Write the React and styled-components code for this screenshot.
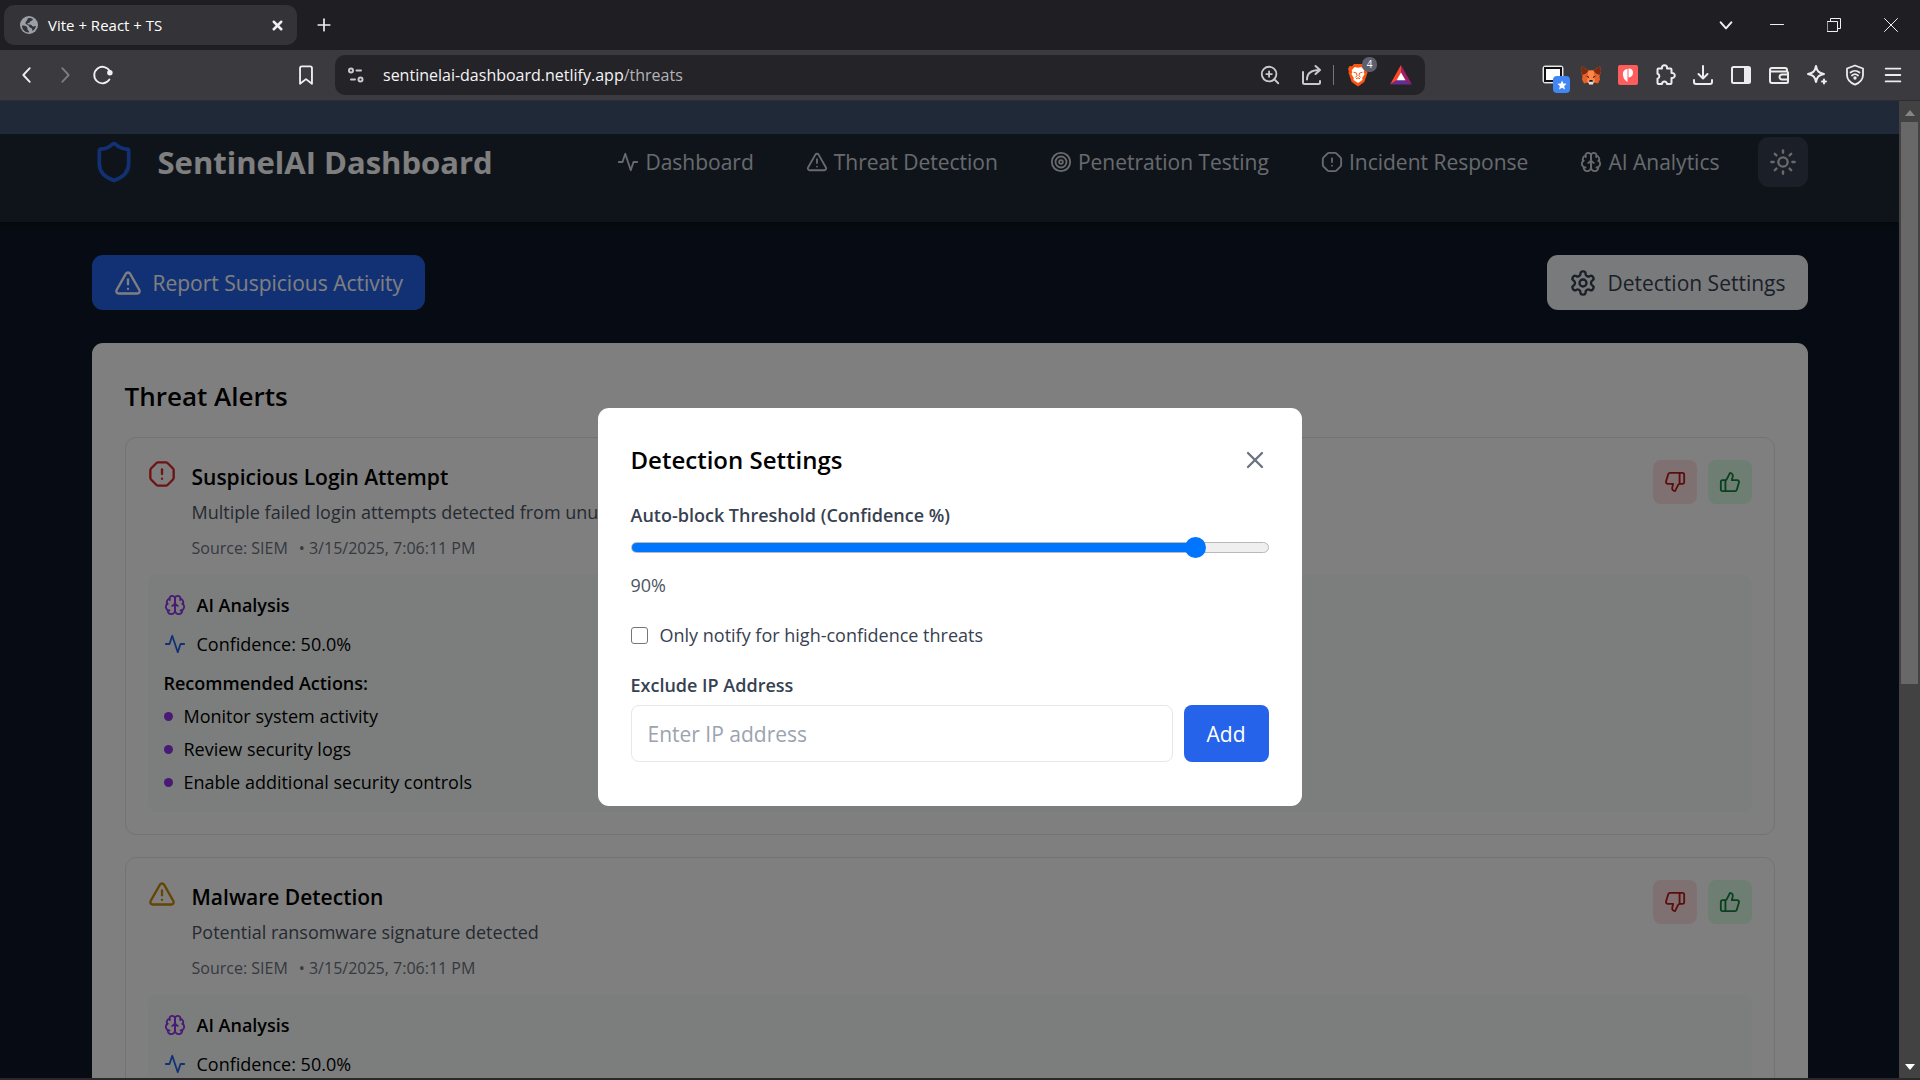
import { useState } from "react";
import styled, { createGlobalStyle } from "styled-components";
import {
  Menu,
  OctagonAlert,
  Plus,
  Shield,
  Sun,
  Target,
  ThumbsDown,
  ThumbsUp,
  TriangleAlert,
  X,
  ZoomIn,
} from "lucide-react";

const alerts = [
  {
    title: "Suspicious Login Attempt",
    description: "Multiple failed login attempts detected from unusual location",
    source: "SIEM",
    time: "3/15/2025, 7:06:11 PM",
    severity: "critical",
  },
  {
    title: "Malware Detection",
    description: "Potential ransomware signature detected",
    source: "SIEM",
    time: "3/15/2025, 7:06:11 PM",
    severity: "warning",
  },
];

const actions = [
  "Monitor system activity",
  "Review security logs",
  "Enable additional security controls",
];

/* ---------- icons ---------- */

function Svg({ size = 24, box = 24, width = 2, children, ...rest }) {
  return (
    <svg
      width={size}
      height={size}
      viewBox={`0 0 ${box} ${box}`}
      fill="none"
      stroke="currentColor"
      strokeWidth={width}
      strokeLinecap="round"
      strokeLinejoin="round"
      aria-hidden="true"
      {...rest}
    >
      {children}
    </svg>
  );
}

const Activity = (props) => (
  <Svg {...props}>
    <path d="M22 12h-4l-3 9L9 3l-3 9H2" />
  </Svg>
);

const Brain = (props) => (
  <Svg {...props}>
    <path d="M12 5a3 3 0 1 0-5.997.125 4 4 0 0 0-2.526 5.77 4 4 0 0 0 .556 6.588A4 4 0 1 0 12 18Z" />
    <path d="M12 5a3 3 0 1 1 5.997.125 4 4 0 0 1 2.526 5.77 4 4 0 0 1-.556 6.588A4 4 0 1 1 12 18Z" />
    <path d="M15 13a4.5 4.5 0 0 1-3-4 4.5 4.5 0 0 1-3 4" />
    <path d="M17.599 6.5a3 3 0 0 0 .399-1.375" />
    <path d="M6.003 5.125A3 3 0 0 0 6.401 6.5" />
    <path d="M3.477 10.896a4 4 0 0 1 .585-.396" />
    <path d="M19.938 10.5a4 4 0 0 1 .585.396" />
    <path d="M6 18a4 4 0 0 1-1.967-.516" />
    <path d="M19.967 17.484A4 4 0 0 1 18 18" />
  </Svg>
);

const Settings = (props) => (
  <Svg {...props}>
    <path d="M12.22 2h-.44a2 2 0 0 0-2 2v.18a2 2 0 0 1-1 1.73l-.43.25a2 2 0 0 1-2 0l-.15-.08a2 2 0 0 0-2.73.73l-.22.38a2 2 0 0 0 .73 2.73l.15.1a2 2 0 0 1 1 1.72v.51a2 2 0 0 1-1 1.74l-.15.09a2 2 0 0 0-.73 2.73l.22.38a2 2 0 0 0 2.73.73l.15-.08a2 2 0 0 1 2 0l.43.25a2 2 0 0 1 1 1.73V20a2 2 0 0 0 2 2h.44a2 2 0 0 0 2-2v-.18a2 2 0 0 1 1-1.73l.43-.25a2 2 0 0 1 2 0l.15.08a2 2 0 0 0 2.73-.73l.22-.39a2 2 0 0 0-.73-2.73l-.15-.08a2 2 0 0 1-1-1.74v-.5a2 2 0 0 1 1-1.74l.15-.09a2 2 0 0 0 .73-2.73l-.22-.38a2 2 0 0 0-2.73-.73l-.15.08a2 2 0 0 1-2 0l-.43-.25a2 2 0 0 1-1-1.73V4a2 2 0 0 0-2-2z" />
    <circle cx="12" cy="12" r="3" />
  </Svg>
);

const Globe = () => (
  <svg width="18" height="18" viewBox="0 0 18 18" aria-hidden="true">
    <circle cx="9" cy="9" r="9" fill="#9aa0a6" />
    <path
      d="M2 9.500c2 0 4 .2 5 1.400s-.2 2 .8 2.900 1.200 1.600 1 2.600C5 16.500 2 13.500 2 9.500zM8 2.200c1.500-.3 3.500 0 4.800.8.200 1.200-.8 1.700-1.900 1.900s-.6 1.500-1.700 1.900-1.700 0-1.700 1 1.500.8 3.100.9 1.500 1.700 2.500 1.800 1.500-.6 2.800-.5c-.3 2.300-1.700 4-3.300 5-.5-1-.2-1.900-1-2.700s-2.300-.6-2.600-2.100S6 8.700 5.500 7.500 6.500 5 7 4.200 7.500 3 8 2.200z"
      fill="#343338"
    />
  </svg>
);

const Back = () => (
  <Svg size={22} width={2}>
    <path d="M15 4.500L8 12l7 7.500" />
  </Svg>
);

const Forward = () => (
  <Svg size={22} width={2}>
    <path d="M9 4.500l7 7.500-7 7.500" />
  </Svg>
);

const Reload = () => (
  <Svg size={22} width={2}>
    <path d="M19 17A9 9 0 1 1 19.500 8" />
    <circle cx="19.500" cy="9.500" r="2" fill="currentColor" />
  </Svg>
);

const BookmarkIcon = () => (
  <Svg size={22} width={2}>
    <path d="M5.500 4.500a2 2 0 0 1 2-2h9a2 2 0 0 1 2 2V21.500L12 16.500l-6.500 5z" />
  </Svg>
);

const Tune = () => (
  <Svg size={18} box={18} width={2}>
    <circle cx="4" cy="4.500" r="2" />
    <path d="M9.500 4.500H14M4 13.500H8" />
    <circle cx="13.500" cy="13.500" r="2" />
  </Svg>
);

const Share = () => (
  <Svg size={22} box={22} width={2}>
    <path d="M2 8v10.500a1.500 1.500 0 0 0 1.500 1.500h14a1.500 1.500 0 0 0 1.500-1.500V17" />
    <path d="M6 15.500C6 9.500 9.500 6 18.500 6M14.500 2l4.500 4-4.500 4" />
  </Svg>
);

const BraveLion = () => (
  <svg width="22" height="24" viewBox="0 0 22 24" aria-hidden="true">
    <path
      d="M7 1h8l2 2.200 2.500-.3L21 6l-.8 2.200.3 1.500-3.200 9.300L11 23.500 4.700 19 1.500 9.700l.3-1.500L1 6l1.500-3.100 2.500.3z"
      fill="#fb5411"
    />
    <path
      d="M11 4.800l3.300-.7 3 3.200-.7 2 1 1.800-2.400 3.800.3 2-4.500 3-4.500-3 .3-2-2.400-3.800 1-1.800-.7-2 3-3.200z"
      fill="#fff"
    />
    <path
      d="M6.500 9.200l3 .9.500 2.600-1.600 1.800M15.500 9.200l-3 .9-.5 2.600 1.600 1.800M9 15.800l2-1 2 1"
      fill="none"
      stroke="#fb5411"
      strokeWidth="1"
    />
  </svg>
);

const BatTriangle = () => (
  <svg width="24" height="22" viewBox="0 0 24 22" aria-hidden="true">
    <path d="M12 1L1 20.500l7-4.300L12 9z" fill="#ff4724" />
    <path d="M12 1l11 19.500-7-4.300L12 9z" fill="#9e1f63" />
    <path d="M1 20.500h22l-7-4.500H8z" fill="#662d91" />
    <path d="M12 8.500L7.500 16.300h9z" fill="#fff" />
  </svg>
);

const TabStack = () => (
  <svg width="22" height="20" viewBox="0 0 22 20" aria-hidden="true">
    <rect x="1" y="1" width="20" height="17" rx="2" fill="#fff" stroke="#d8d8d8" />
    <rect x="3" y="3" width="16" height="13" fill="#fff" stroke="#111" strokeWidth="2" />
  </svg>
);

const StarMark = () => (
  <svg width="10" height="10" viewBox="0 0 24 24" aria-hidden="true">
    <path d="M12 1l3.200 7.500 8 .7-6 5.300 1.800 8L12 18.300 5 22.500l1.800-8-6-5.300 8-.7z" fill="#fff" />
  </svg>
);

const Fox = () => (
  <svg width="22" height="22" viewBox="0 0 22 22" aria-hidden="true">
    <path d="M2 2l6.500 4.500h5L20 2l1 5.500-1.500 5 .5 3-2 4-4-1-1.500 1.800h-3L8 18.500l-4 1-2-4 .5-3L1 7.500z" fill="#e8602a" />
    <path d="M2 2l6.500 4.800L6 9.500 2.500 11 1 7.500zM20 2l-6.500 4.800L16 9.500l3.500 1.500L21 7.500z" fill="#7a2c12" />
    <path d="M8.500 6.500h5l1 6 .5 5-2 2h-4l-2-2 .5-5z" fill="#ff8644" />
    <path d="M6 11.500l3 1.200-.5 1.500zM16 11.500l-3 1.200.5 1.500z" fill="#1d1b22" />
    <path d="M8.500 17l1-1h3l1 1-.5 3.500H9z" fill="#e5ded8" />
    <path d="M9.500 16h3l.5 1.800H9z" fill="#15181c" />
  </svg>
);

const PMark = () => (
  <svg width="20" height="20" viewBox="0 0 20 20" aria-hidden="true">
    <rect width="20" height="20" rx="2" fill="#ff5c5c" />
    <path d="M9.500 4v13L7 15C5.300 13 4.700 10 5 7.500 5.500 5.500 7.500 4.200 9.500 4z" fill="#fff" />
    <path d="M10.500 3.500c3 0 4.500 1.500 4.500 4.200s-1.500 4.300-4.500 4.800z" fill="#fff" />
  </svg>
);

const Puzzle = () => (
  <Svg size={22} box={22} width={2}>
    <path d="M4.500 4.500H8a2.600 2.600 0 1 1 5 0h3.500a1 1 0 0 1 1 1V9a2.600 2.600 0 1 1 0 5v5a1 1 0 0 1-1 1H13a2.500 2.500 0 0 0-5 0H4.500a1 1 0 0 1-1-1v-4.200a2.600 2.600 0 0 0 0-5V5.500a1 1 0 0 1 1-1z" />
  </Svg>
);

const DownloadTray = () => (
  <Svg size={22} box={22} width={2}>
    <path d="M11 2v12M6.500 10l4.500 4.500L15.500 10M2 16v2a2 2 0 0 0 2 2h14a2 2 0 0 0 2-2v-2" />
  </Svg>
);

const SidePanel = () => (
  <Svg size={22} box={22} width={2}>
    <rect x="2" y="3" width="18" height="16" rx="1.500" />
    <path d="M15 4h4v14h-4z" fill="currentColor" />
  </Svg>
);

const WalletIcon = () => (
  <Svg size={22} box={22} width={2}>
    <path d="M19 7.500V6a2 2 0 0 0-2-2H4a2 2 0 0 0-2 2v11a2 2 0 0 0 2 2h14.500a1.500 1.500 0 0 0 1.500-1.500V9a1.500 1.500 0 0 0-1.500-1.500H2.500" />
    <path d="M20 10.500h-6a2.500 2.500 0 0 0 0 5h6" />
  </Svg>
);

const Sparkle = () => (
  <Svg size={22} box={22} width={2}>
    <path d="M10 2c1 5 2.500 7 8 8-5.500 1-7 3-8 8-1-5-2.500-7-8-8 5.500-1 7-3 8-8z" />
    <path d="M18 15.500v4M16 17.500h4" />
  </Svg>
);

const ShieldWifi = () => (
  <Svg size={22} box={22} width={1.8}>
    <path d="M11 1.500l8 3V11c0 4.500-3.500 7.800-8 9.700C6.500 18.800 3 15.500 3 11V4.500z" />
    <path d="M6.500 8.500a7 7 0 0 1 9 0M8 11.500a4.500 4.500 0 0 1 6 0" />
    <circle cx="11" cy="14" r="0.800" fill="currentColor" />
  </Svg>
);

/* ---------- app ---------- */

function BrowserChrome() {
  return (
    <Chrome>
      <TabStrip>
        <Tab>
          <Globe />
          <TabTitle>Vite + React + TS</TabTitle>
          <ChromeButton aria-label="Close tab">
            <X size={15} strokeWidth={4} />
          </ChromeButton>
        </Tab>
        <ChromeButton aria-label="New tab">
          <Plus size={20} />
        </ChromeButton>
        <TabSearch>
          <ChromeButton aria-label="Search tabs">
            <Svg size={16} width={3}>
              <path d="M4 8l8 9 8-9" />
            </Svg>
          </ChromeButton>
        </TabSearch>
        <WindowControls>
          <ChromeButton aria-label="Minimize">
            <Svg size={14} box={14} width={1}>
              <path d="M0.500 6.500h13" />
            </Svg>
          </ChromeButton>
          <ChromeButton aria-label="Restore">
            <Svg size={14} box={14} width={1}>
              <path d="M.5 3.500h10v10H.5zM3.500 3V.5h10v10H11" />
            </Svg>
          </ChromeButton>
          <ChromeButton aria-label="Close window">
            <Svg size={14} box={14} width={1}>
              <path d="M.5.5l13 13M13.500.5l-13 13" />
            </Svg>
          </ChromeButton>
        </WindowControls>
      </TabStrip>
      <Toolbar>
        <NavButtons>
          <ChromeButton aria-label="Back"><Back /></ChromeButton>
          <ChromeButton aria-label="Forward" $muted><Forward /></ChromeButton>
          <ChromeButton aria-label="Reload"><Reload /></ChromeButton>
        </NavButtons>
        <ChromeButton aria-label="Bookmark this page"><BookmarkIcon /></ChromeButton>
        <AddressBar>
          <Tune />
          <Url>
            sentinelai-dashboard.netlify.app<UrlPath>/threats</UrlPath>
          </Url>
          <AddressTools>
            <ZoomIn size={22} strokeWidth={2} />
            <Share />
            <Divider />
            <Badged>
              <BraveLion />
              <CountBadge>4</CountBadge>
            </Badged>
            <BatTriangle />
          </AddressTools>
        </AddressBar>
        <Extensions>
          <Badged>
            <TabStack />
            <StarBadge><StarMark /></StarBadge>
          </Badged>
          <Fox />
          <PMark />
          <Puzzle />
          <DownloadTray />
          <SidePanel />
          <WalletIcon />
          <Sparkle />
          <ShieldWifi />
          <Menu size={22} strokeWidth={2} />
        </Extensions>
      </Toolbar>
    </Chrome>
  );
}

function AlertItem({ alert }) {
  const Icon = alert.severity === "critical" ? OctagonAlert : TriangleAlert;

  return (
    <AlertCard>
      <AlertTop>
        <SeverityIcon $severity={alert.severity}>
          <Icon size={28} />
        </SeverityIcon>
        <AlertText>
          <AlertTitle>{alert.title}</AlertTitle>
          <AlertDescription>{alert.description}</AlertDescription>
          <AlertMeta>
            <span>Source: {alert.source}</span>
            <span>• {alert.time}</span>
          </AlertMeta>
        </AlertText>
        <Feedback>
          <FeedbackButton $tone="bad" aria-label="False positive">
            <ThumbsDown size={22} />
          </FeedbackButton>
          <FeedbackButton $tone="good" aria-label="Confirm threat">
            <ThumbsUp size={22} />
          </FeedbackButton>
        </Feedback>
      </AlertTop>
      <Analysis>
        <AnalysisRow $color="#9333ea">
          <Brain size={22} />
          <strong>AI Analysis</strong>
        </AnalysisRow>
        <AnalysisRow $color="#2563eb">
          <Activity size={22} />
          <span>Confidence: 50.0%</span>
        </AnalysisRow>
        <div>
          <ActionsTitle>Recommended Actions:</ActionsTitle>
          <ActionList>
            {actions.map((action) => (
              <ActionItem key={action}>{action}</ActionItem>
            ))}
          </ActionList>
        </div>
      </Analysis>
    </AlertCard>
  );
}

function SettingsModal() {
  const [threshold, setThreshold] = useState(90);
  const [onlyHigh, setOnlyHigh] = useState(false);
  const [ip, setIp] = useState("");

  return (
    <Overlay>
      <Modal role="dialog" aria-labelledby="settings-title">
        <ModalHeader>
          <ModalTitle id="settings-title">Detection Settings</ModalTitle>
          <CloseButton aria-label="Close">
            <X size={28} />
          </CloseButton>
        </ModalHeader>
        <Field>
          <Label htmlFor="threshold">Auto-block Threshold (Confidence %)</Label>
          <Range
            id="threshold"
            type="range"
            min="0"
            max="100"
            value={threshold}
            $value={threshold}
            onChange={(e) => setThreshold(Number(e.target.value))}
          />
          <RangeValue>{threshold}%</RangeValue>
        </Field>
        <CheckLabel>
          <Checkbox
            type="checkbox"
            checked={onlyHigh}
            onChange={(e) => setOnlyHigh(e.target.checked)}
          />
          Only notify for high-confidence threats
        </CheckLabel>
        <Field>
          <Label htmlFor="ip">Exclude IP Address</Label>
          <InputRow>
            <TextInput
              id="ip"
              type="text"
              placeholder="Enter IP address"
              value={ip}
              onChange={(e) => setIp(e.target.value)}
            />
            <AddButton>Add</AddButton>
          </InputRow>
        </Field>
      </Modal>
    </Overlay>
  );
}

export default function App() {
  return (
    <Window>
      <GlobalStyle />
      <BrowserChrome />
      <Viewport>
        <Page>
          <Header>
            <HeaderInner>
              <Brand>
                <Shield size={44} color="#2563eb" />
                <BrandName>SentinelAI Dashboard</BrandName>
              </Brand>
              <Nav>
                <NavLink href="#dashboard"><Activity size={22} />Dashboard</NavLink>
                <NavLink href="#threats"><TriangleAlert size={22} />Threat Detection</NavLink>
                <NavLink href="#pentest"><Target size={22} />Penetration Testing</NavLink>
                <NavLink href="#incidents"><OctagonAlert size={22} />Incident Response</NavLink>
                <NavLink href="#analytics"><Brain size={22} />AI Analytics</NavLink>
              </Nav>
              <ThemeButton aria-label="Toggle theme">
                <Sun size={28} />
              </ThemeButton>
            </HeaderInner>
          </Header>
          <Main>
            <ActionsBar>
              <BarButton $primary>
                <TriangleAlert size={28} />
                Report Suspicious Activity
              </BarButton>
              <BarButton>
                <Settings size={28} />
                Detection Settings
              </BarButton>
            </ActionsBar>
            <Panel>
              <PanelTitle>Threat Alerts</PanelTitle>
              <AlertList>
                {alerts.map((alert) => (
                  <AlertItem key={alert.title} alert={alert} />
                ))}
              </AlertList>
            </Panel>
          </Main>
          <SettingsModal />
        </Page>
        <Scrollbar>
          <ScrollArrow $up />
          <ScrollTrack>
            <ScrollThumb />
          </ScrollTrack>
          <ScrollArrow />
        </Scrollbar>
      </Viewport>
      <Taskbar />
    </Window>
  );
}

/* ---------- styles ---------- */

const GlobalStyle = createGlobalStyle`
  * {
    box-sizing: border-box;
    margin: 0;
    padding: 0;
  }
  body {
    font-family: "Open Sans", "Noto Sans", sans-serif;
    overflow: hidden;
  }
  button,
  input {
    font: inherit;
  }
  button {
    border: none;
    cursor: pointer;
  }
  svg {
    flex-shrink: 0;
    display: block;
  }
`;

const Window = styled.div`
  display: flex;
  flex-direction: column;
  height: 100vh;
`;

const Chrome = styled.header`
  border-bottom: 1px solid #2f2d31;
  color: #e6e6e8;
`;

const TabStrip = styled.div`
  display: flex;
  align-items: center;
  height: 50px;
  padding-left: 4px;
  background: #1f1e23;
`;

const Tab = styled.div`
  display: flex;
  align-items: center;
  gap: 10px;
  width: 293px;
  height: 40px;
  padding: 0 12px 0 16px;
  margin-right: 17px;
  border-radius: 10px;
  background: #343338;
`;

const TabTitle = styled.span`
  flex: 1;
  font-size: 15px;
  line-height: 20px;
  color: #fff;
`;

const ChromeButton = styled.button`
  display: flex;
  align-items: center;
  justify-content: center;
  background: none;
  color: ${(props) => (props.$muted ? "#7d7c80" : "#f0f0f2")};
`;

const TabSearch = styled.div`
  margin-left: auto;
  padding-right: 36px;
`;

const WindowControls = styled.div`
  display: flex;
  align-items: center;
  gap: 43px;
  padding-right: 22px;
`;

const Toolbar = styled.div`
  display: flex;
  align-items: center;
  height: 50px;
  background: #3b3a3f;
`;

const NavButtons = styled.div`
  display: flex;
  gap: 16px;
  flex: 0 0 295px;
  padding-left: 16px;
`;

const AddressBar = styled.div`
  display: flex;
  align-items: center;
  flex: 1;
  gap: 18px;
  height: 40px;
  margin-left: 18px;
  padding: 0 12px;
  border-radius: 10px;
  background: #242328;
  color: #c9c9cc;
`;

const Url = styled.span`
  font-size: 16px;
  line-height: 22px;
  color: #f4f4f5;
`;

const UrlPath = styled.span`
  color: #b4b4b7;
`;

const AddressTools = styled.div`
  display: flex;
  align-items: center;
  gap: 20px;
  margin-left: auto;
`;

const Divider = styled.span`
  width: 1px;
  height: 20px;
  margin: 0 -7px 0 -10px;
  background: #77767a;
`;

const Badged = styled.span`
  position: relative;
`;

const CountBadge = styled.span`
  position: absolute;
  top: -6px;
  right: -8px;
  width: 15px;
  height: 15px;
  border-radius: 7px;
  background: #5b5f6e;
  color: #fff;
  font-size: 10px;
  line-height: 15px;
  text-align: center;
`;

const StarBadge = styled.span`
  position: absolute;
  right: -6px;
  bottom: -8px;
  display: flex;
  align-items: center;
  justify-content: center;
  width: 17px;
  height: 17px;
  border-radius: 4px;
  background: #4285f4;
`;

const Extensions = styled.div`
  display: flex;
  align-items: center;
  gap: 16px;
  margin-left: 117px;
  padding-right: 16px;
  color: #ececee;
`;

const Viewport = styled.div`
  display: flex;
  flex: 1;
  min-height: 0;
`;

const Page = styled.div`
  position: relative;
  flex: 1;
  min-width: 0;
  overflow: hidden;
  background: #0e1726;
`;

const Header = styled.div`
  background: #1f2937;
  box-shadow: 0 2px 6px rgba(0, 0, 0, 0.3);
`;

const HeaderInner = styled.div`
  display: flex;
  align-items: center;
  max-width: 1760px;
  height: 121px;
  margin: 0 auto;
  padding: 0 22px;
`;

const Brand = styled.div`
  display: flex;
  align-items: center;
  gap: 22px;
`;

const BrandName = styled.h1`
  font-size: 31px;
  font-weight: 700;
  color: #fff;
`;

const Nav = styled.nav`
  display: flex;
  gap: 52px;
  margin-left: auto;
`;

const NavLink = styled.a`
  display: flex;
  align-items: center;
  gap: 6px;
  font-size: 21px;
  line-height: 32px;
  color: #d1d5db;
  text-decoration: none;
  white-space: nowrap;
`;

const ThemeButton = styled.button`
  padding: 11px;
  margin-left: 38px;
  border-radius: 11px;
  background: #374151;
  color: #d1d5db;
`;

const Main = styled.main`
  max-width: 1760px;
  margin: 0 auto;
  padding: 33px 22px;
`;

const ActionsBar = styled.div`
  display: flex;
  justify-content: space-between;
  margin-bottom: 33px;
`;

const BarButton = styled.button`
  display: flex;
  align-items: center;
  gap: 11px;
  height: 55px;
  padding: 0 22px;
  border-radius: 11px;
  font-size: 21px;
  background: ${(props) => (props.$primary ? "#2563eb" : "#f3f4f6")};
  color: ${(props) => (props.$primary ? "#fff" : "#374151")};
`;

const Panel = styled.section`
  padding: 33px;
  border-radius: 11px;
  background: #fff;
`;

const PanelTitle = styled.h2`
  margin-bottom: 21px;
  font-size: 26px;
  line-height: 40px;
  font-weight: 600;
`;

const AlertList = styled.div`
  display: flex;
  flex-direction: column;
  gap: 22px;
`;

const AlertCard = styled.article`
  padding: 22px;
  border: 1px solid #e5e7eb;
  border-radius: 11px;
`;

const AlertTop = styled.div`
  display: flex;
  align-items: flex-start;
`;

const SeverityIcon = styled.span`
  margin-right: 16px;
  color: ${(props) => (props.$severity === "critical" ? "#dc2626" : "#ca8a04")};
`;

const AlertText = styled.div`
  flex: 1;
`;

const AlertTitle = styled.h3`
  font-size: 21px;
  line-height: 35px;
  font-weight: 600;
`;

const AlertDescription = styled.p`
  margin-top: 3px;
  font-size: 18px;
  line-height: 28px;
  color: #4b5563;
`;

const AlertMeta = styled.p`
  display: flex;
  gap: 11px;
  margin-top: 11px;
  font-size: 16px;
  line-height: 22px;
  color: #6b7280;
`;

const Feedback = styled.div`
  display: flex;
  gap: 11px;
`;

const FeedbackButton = styled.button`
  padding: 11px;
  border-radius: 8px;
  background: ${(props) => (props.$tone === "bad" ? "#fee2e2" : "#dcfce7")};
  color: ${(props) => (props.$tone === "bad" ? "#b91c1c" : "#15803d")};
`;

const Analysis = styled.div`
  display: flex;
  flex-direction: column;
  gap: 11px;
  margin-top: 16px;
  padding: 16px;
  border-radius: 8px;
  background: #f8fdfa;
  font-size: 18px;
  line-height: 28px;
`;

const AnalysisRow = styled.div`
  display: flex;
  align-items: center;
  gap: 11px;

  svg {
    color: ${(props) => props.$color};
  }
  strong {
    font-weight: 600;
  }
`;

const ActionsTitle = styled.h4`
  margin-bottom: 5px;
  font-size: 18px;
  font-weight: 600;
`;

const ActionList = styled.ul`
  display: flex;
  flex-direction: column;
  gap: 5px;
  list-style: none;
`;

const ActionItem = styled.li`
  display: flex;
  align-items: center;
  gap: 11px;

  &::before {
    content: "";
    width: 9px;
    height: 9px;
    border-radius: 50%;
    background: #9333ea;
  }
`;

const Overlay = styled.div`
  position: absolute;
  inset: 33px 0 -2px;
  display: flex;
  align-items: center;
  justify-content: center;
  background: rgba(0, 0, 0, 0.5);
`;

const Modal = styled.div`
  display: flex;
  flex-direction: column;
  gap: 22px;
  width: 100%;
  max-width: 704px;
  padding: 33px 33px 44px;
  border-radius: 11px;
  background: #fff;
`;

const ModalHeader = styled.div`
  display: flex;
  align-items: center;
  justify-content: space-between;
`;

const ModalTitle = styled.h2`
  font-size: 24px;
  line-height: 38px;
  font-weight: 600;
`;

const CloseButton = styled.button`
  background: none;
  color: #6b7280;
`;

const Field = styled.div`
  display: flex;
  flex-direction: column;
`;

const Label = styled.label`
  margin-bottom: 6px;
  font-size: 18px;
  line-height: 28px;
  font-weight: 600;
  color: #374151;
`;

const Range = styled.input`
  appearance: none;
  width: 100%;
  height: 24px;
  margin-bottom: 12px;
  background: none;

  &::-webkit-slider-runnable-track {
    height: 11px;
    border: 1px solid #b9b9b9;
    border-radius: 6px;
    background: linear-gradient(
      to right,
      #0075ff ${(props) => props.$value}%,
      #efefef ${(props) => props.$value}%
    );
  }
  &::-webkit-slider-thumb {
    appearance: none;
    width: 21px;
    height: 21px;
    margin-top: -6px;
    border-radius: 50%;
    background: #0075ff;
  }
`;

const RangeValue = styled.output`
  font-size: 18px;
  line-height: 28px;
  color: #4b5563;
`;

const CheckLabel = styled.label`
  display: flex;
  align-items: center;
  gap: 12px;
  font-size: 18px;
  line-height: 28px;
  color: #374151;
`;

const Checkbox = styled.input`
  appearance: none;
  width: 17px;
  height: 17px;
  border: 1px solid #767676;
  border-radius: 3px;
  background: #fff;

  &:checked {
    background: #0075ff;
  }
`;

const InputRow = styled.div`
  display: flex;
  gap: 11px;
`;

const TextInput = styled.input`
  flex: 1;
  min-width: 0;
  height: 57px;
  padding: 0 16px;
  border: 1px solid #e5e7eb;
  border-radius: 8px;
  font-size: 21px;

  &::placeholder {
    color: #9ca3af;
  }
`;

const AddButton = styled.button`
  padding: 0 23px;
  border-radius: 8px;
  background: #2563eb;
  color: #fff;
  font-size: 21px;
`;

const Scrollbar = styled.div`
  display: flex;
  flex-direction: column;
  align-items: center;
  width: 21px;
  background: #424242;
`;

const ScrollArrow = styled.span`
  flex: 0 0 auto;
  margin: ${(props) => (props.$up ? "9px 0 6px" : "6px 0 8px")};
  border: 5px solid transparent;
  border-${(props) => (props.$up ? "bottom" : "top")}: 6px solid ${(props) => (props.$up ? "#868686" : "#fff")};
  border-${(props) => (props.$up ? "top" : "bottom")}: none;
`;

const ScrollTrack = styled.div`
  flex: 1;
  width: 17px;
`;

const ScrollThumb = styled.div`
  height: 60%;
  background: #686868;
`;

const Taskbar = styled.div`
  height: 2px;
  background: #2b272a;
`;
